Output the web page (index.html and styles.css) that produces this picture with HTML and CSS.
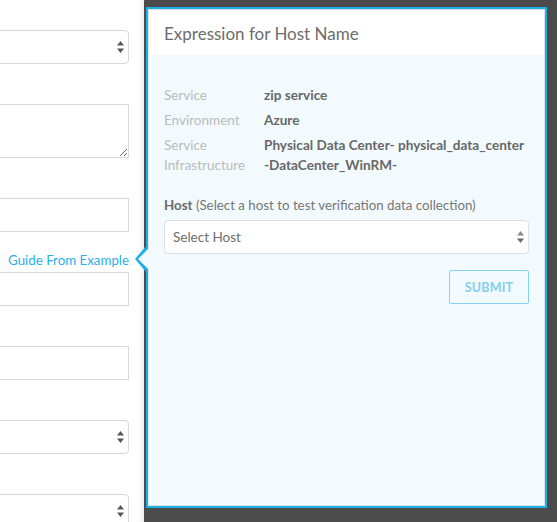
FILE: index.html
```html
<!DOCTYPE html>
<html>
<head>
<meta charset="utf-8">
<link rel="stylesheet" href="styles.css">
</head>
<body>
<div class="screen">
  <aside class="form-panel">
    <div class="group first">
      <div class="control select-box">
        <svg class="updown" width="7" height="12" viewBox="0 0 7 12"><path d="M3.5 0L7 4.5H0Z" fill="#555"/><path d="M3.5 12L7 7.5H0Z" fill="#555"/></svg>
      </div>
    </div>
    <div class="group">
      <textarea class="control area"></textarea>
    </div>
    <div class="group">
      <div class="control input"></div>
    </div>
    <div class="group with-link">
      <div class="group-head"><span class="guide-link">Guide From Example</span></div>
      <div class="control input"></div>
    </div>
    <div class="group">
      <div class="control input"></div>
    </div>
    <div class="group">
      <div class="control select-box">
        <svg class="updown" width="7" height="12" viewBox="0 0 7 12"><path d="M3.5 0L7 4.5H0Z" fill="#555"/><path d="M3.5 12L7 7.5H0Z" fill="#555"/></svg>
      </div>
    </div>
    <div class="group">
      <div class="control select-box">
        <svg class="updown" width="7" height="12" viewBox="0 0 7 12"><path d="M3.5 0L7 4.5H0Z" fill="#555"/><path d="M3.5 12L7 7.5H0Z" fill="#555"/></svg>
      </div>
    </div>
  </aside>
  <main class="backdrop">
    <section class="popover">
      <span class="arrow-outer"></span>
      <span class="arrow-inner"></span>
      <div class="popover-inner">
        <header class="pop-head">Expression for Host Name</header>
        <div class="pop-body">
          <dl class="info">
            <div class="info-row"><dt>Service</dt><dd>zip service</dd></div>
            <div class="info-row"><dt>Environment</dt><dd>Azure</dd></div>
            <div class="info-row"><dt>Service Infrastructure</dt><dd><span class="line">Physical Data Center- physical_data_center</span> <span class="line">-DataCenter_WinRM-</span></dd></div>
          </dl>
          <div class="host-label"><b>Host</b> (Select a host to test verification data collection)</div>
          <div class="host-select">
            <span>Select Host</span>
            <svg class="updown-sm" width="7" height="12" viewBox="0 0 7 12"><path d="M3.5 0L7 4.5H0Z" fill="#8a8a8a"/><path d="M3.5 12L7 7.5H0Z" fill="#6a6a6a"/></svg>
          </div>
          <div class="actions"><button class="submit">SUBMIT</button></div>
        </div>
      </div>
    </section>
  </main>
</div>
</body>
</html>
```

FILE: styles.css
```css
* { box-sizing: border-box; }
html, body { margin: 0; padding: 0; }
body {
  width: 557px;
  height: 522px;
  overflow: hidden;
  font-family: "Lato", "Open Sans", sans-serif;
  font-size: 13.5px;
  color: #666;
  background: #4b4b4b;
}
.screen {
  display: flex;
  height: 522px;
}
.form-panel {
  width: 144px;
  flex: none;
  background: #fff;
  box-shadow: inset -7px 0 7px -5px rgba(0,0,0,0.09);
  padding-top: 30px;
  overflow: hidden;
  display: flex;
  flex-direction: column;
}
.group { padding-top: 40px; }
.group.first { padding-top: 0; }
.group.with-link { padding-top: 0; }
.group-head {
  height: 40px;
  display: flex;
  align-items: flex-end;
  justify-content: flex-end;
  padding: 0 15px 3px 0;
}
.guide-link {
  color: #29b0e6;
  font-size: 13.3px;
  line-height: 18px;
}
.control {
  display: block;
  margin: 0 0 0 -20px;
  width: 149px;
  height: 34px;
  border: 1px solid #d4d7df;
  background: #fff;
}
.select-box {
  border-radius: 4px;
  display: flex;
  align-items: center;
  justify-content: flex-end;
  padding-right: 4px;
}
.area {
  height: 54px;
  resize: vertical;
  font: inherit;
  outline: none;
  padding: 0;
}
.backdrop {
  flex: 1;
  padding: 7px 10px 14px 2px;
  display: flex;
}
.popover {
  position: relative;
  flex: 1;
  border: 2px solid #1eaee6;
  display: flex;
}
.arrow-outer {
  position: absolute;
  left: -13px;
  top: 236px;
  width: 0; height: 0;
  border-top: 14px solid transparent;
  border-bottom: 14px solid transparent;
  border-right: 12px solid #1eaee6;
}
.arrow-inner {
  position: absolute;
  left: -10px;
  top: 238px;
  width: 0; height: 0;
  border-top: 12px solid transparent;
  border-bottom: 12px solid transparent;
  border-right: 12px solid #f2fafd;
}
.popover-inner {
  flex: 1;
  border: 1px solid #dde2e5;
  background: #f2fafd;
  display: flex;
  flex-direction: column;
}
.pop-head {
  background: #fff;
  height: 45px;
  padding: 1px 15px 0;
  display: flex;
  align-items: center;
  font-size: 17px;
  color: #6d6d6d;
}
.pop-body {
  padding: 30px 15px 15px 15px;
}
.info { margin: 0; }
.info-row {
  display: flex;
  line-height: 20px;
  margin-bottom: 5px;
}
.info-row dt {
  width: 100px;
  flex: none;
  color: #b9bcbf;
}
.info-row dd {
  margin: 0;
  font-weight: bold;
  font-size: 13.6px;
  color: #686868;
}
.info-row dd .line {
  display: block;
  white-space: nowrap;
}
.host-label {
  margin-top: 20px;
  line-height: 20px;
  font-size: 13.3px;
  color: #777;
}
.host-label b { color: #6a6a6a; }
.host-select {
  margin-top: 5px;
  height: 34px;
  background: #fff;
  border: 1px solid #dcdfe4;
  border-radius: 4px;
  display: flex;
  align-items: center;
  justify-content: space-between;
  padding: 0 4px 0 8px;
  color: #6d6d6d;
}
.actions {
  margin-top: 16px;
  display: flex;
  justify-content: flex-end;
}
.submit {
  width: 80px;
  height: 34px;
  background: transparent;
  border: 1px solid #84d3f1;
  border-radius: 2px;
  color: #80d0ef;
  font-family: inherit;
  font-weight: bold;
  font-size: 12.5px;
  letter-spacing: 0.2px;
}
```
